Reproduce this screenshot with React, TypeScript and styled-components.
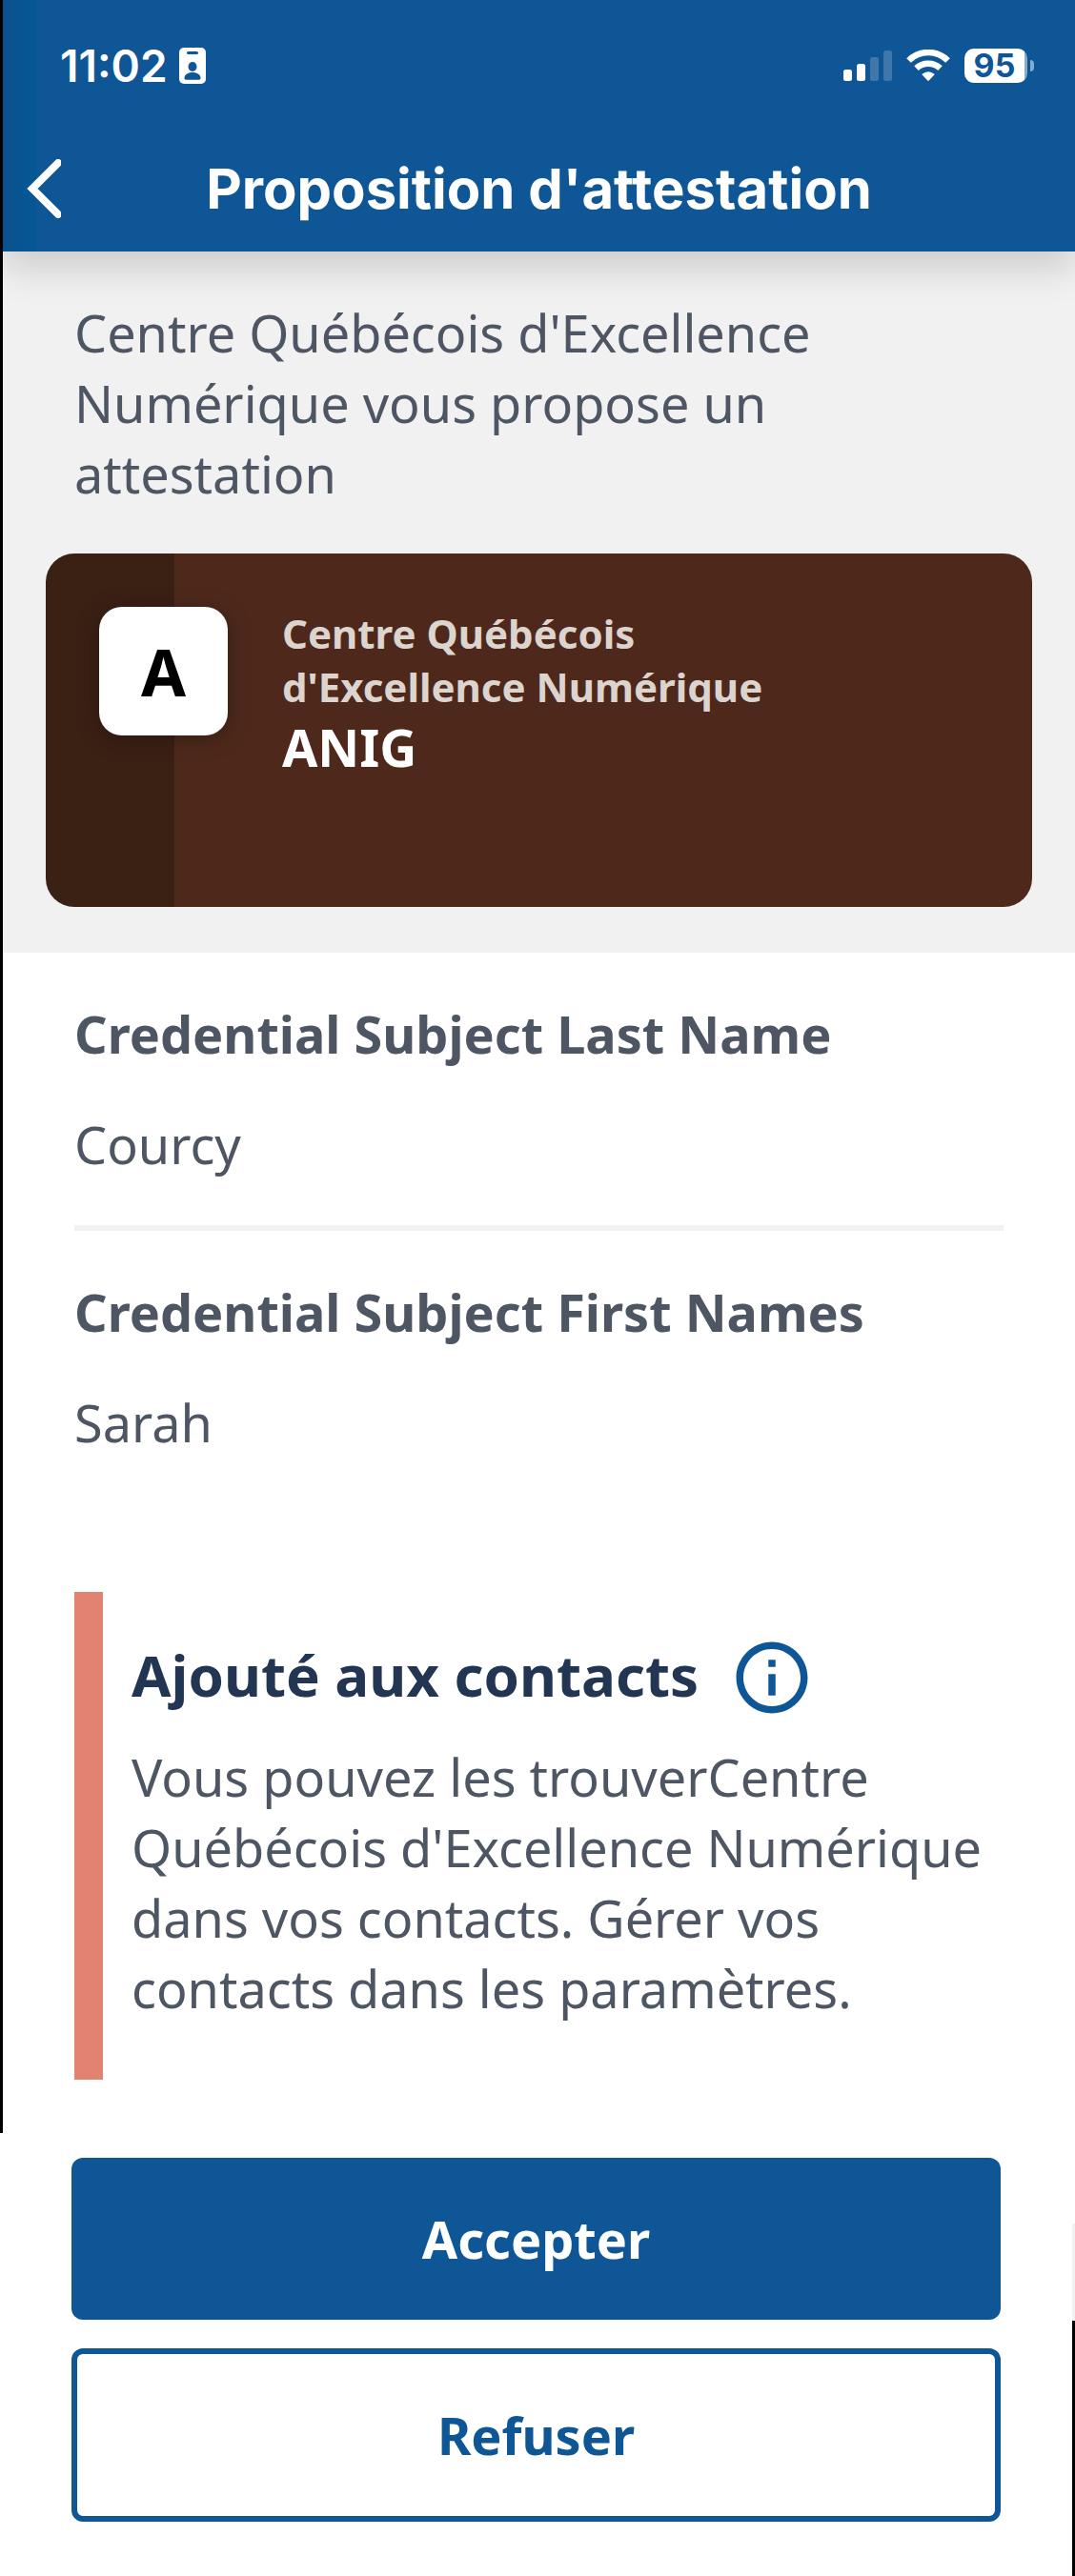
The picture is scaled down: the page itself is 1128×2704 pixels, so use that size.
import React from "react";
import styled, { createGlobalStyle } from "styled-components";
import { MdInfoOutline } from "react-icons/md";

const color = {
  blue: "#0f5696",
  ink: "#4e5664",
  navy: "#223654",
  grey: "#f1f1f1",
  salmon: "#e28271",
  brown: "#4e291b",
  brownDark: "#3b2014",
};

const GlobalStyle = createGlobalStyle`
  *, *::before, *::after { box-sizing: border-box; }
  body {
    margin: 0;
    background: #fff;
    color: ${color.ink};
    font-family: "Noto Sans", sans-serif;
    font-size: 54px;
    line-height: 74px;
  }
  h1, h2, p, dl, dd { margin: 0; }
  button { font: inherit; cursor: pointer; }
`;

const Screen = styled.div`
  display: flex;
  flex-direction: column;
  min-height: 100vh;
`;

const Scroll = styled.div`
  flex: 1;
  border-left: 3px solid #000;
`;

const Header = styled.header`
  position: relative;
  color: #fff;
  background: linear-gradient(to right, #0a528f, #055794 35px, transparent 35px) ${color.blue};
  box-shadow: 0 18px 36px rgba(0, 0, 0, 0.15);
  font-family: Inter, sans-serif;
`;

const StatusBar = styled.div`
  display: flex;
  align-items: center;
  justify-content: space-between;
  height: 132px;
  padding: 6px 43px 0 60px;
`;

const StatusGroup = styled.div<{ $gap: number }>`
  display: flex;
  align-items: center;
  gap: ${(p) => p.$gap}px;
`;

const Time = styled.time`
  font-size: 46px;
  font-weight: 600;
`;

const Battery = styled.div`
  display: flex;
  align-items: center;
  gap: 3px;
`;

const BatteryBody = styled.span`
  width: 66px;
  height: 36px;
  padding-right: 3px;
  border-radius: 10px;
  background: linear-gradient(to right, #fff 63px, #87abcb 63px);
  color: ${color.blue};
  font-size: 34px;
  font-weight: 700;
  line-height: 36px;
  text-align: center;
`;

const BatteryTip = styled.span`
  width: 4px;
  height: 12px;
  border-radius: 0 6px 6px 0;
  background: #87abcb;
`;

const NavBar = styled.div`
  display: grid;
  grid-template-columns: 90px 1fr 90px;
  align-items: center;
  height: 132px;
`;

const BackButton = styled.button`
  display: flex;
  padding: 0 0 0 24px;
  border: 0;
  background: none;
  color: inherit;
`;

const Title = styled.h1`
  font-size: 58px;
  font-weight: 700;
  text-align: center;
`;

const Offer = styled.section`
  padding: 48px 45px;
  background: ${color.grey};
`;

const Intro = styled.p`
  padding: 0 30px 47px;
`;

const Card = styled.article`
  display: grid;
  grid-template-columns: 135px 1fr 135px;
  min-height: 371px;
  border-radius: 30px;
  background: linear-gradient(to right, ${color.brownDark} 135px, ${color.brown} 135px);
  padding: 56px;
  column-gap: 57px;
`;

const CardLogo = styled.div`
  display: flex;
  align-items: center;
  justify-content: center;
  width: 135px;
  height: 135px;
  border-radius: 24px;
  background: #fff;
  box-shadow: 0 3px 24px rgba(0, 0, 0, 0.3);
  color: #000;
  font-size: 68px;
  font-weight: 700;
`;

const Issuer = styled.p`
  color: #dbd4cf;
  font-size: 42px;
  font-weight: 700;
  line-height: 56px;
`;

const CardName = styled.h2`
  color: #fff;
  font-size: 54px;
  line-height: 70px;
`;

const Fields = styled.dl`
  padding: 0 75px;
`;

const Field = styled.div`
  display: flex;
  flex-direction: column;
  gap: 42px;
  padding: 48px 0;

  & + & {
    border-top: 6px solid ${color.grey};
  }
`;

const FieldLabel = styled.dt`
  font-weight: 700;
`;

const Notice = styled.section`
  margin: 93px 75px 56px;
  padding: 45px 0 59px 30px;
  border-left: 30px solid ${color.salmon};
`;

const NoticeHead = styled.div`
  display: flex;
  align-items: flex-start;
  gap: 32px;
  padding-bottom: 22px;
`;

const NoticeTitle = styled.h2`
  color: ${color.navy};
  font-size: 60px;
  line-height: 84px;
`;

const InfoButton = styled.button`
  display: flex;
  padding: 0;
  border: 0;
  background: none;
  color: ${color.blue};
`;

const Footer = styled.footer`
  display: flex;
  flex-direction: column;
  gap: 30px;
  padding: 26px 78px 57px 75px;
  background:
    linear-gradient(#fff 95px, ${color.grey} 95px, ${color.grey} 197px, #000 197px)
    right / 3px 100% no-repeat #fff;
`;

const ActionButton = styled.button<{ $outlined?: boolean }>`
  padding: 48px;
  border: ${(p) => (p.$outlined ? `6px solid ${color.blue}` : "0")};
  border-radius: 12px;
  background: ${(p) => (p.$outlined ? "#fff" : color.blue)};
  color: ${(p) => (p.$outlined ? color.blue : "#fff")};
  font-weight: 700;
`;

const BadgeIcon = () => (
  <svg width="28" height="38" viewBox="0 0 28 38" aria-hidden="true">
    <rect width="28" height="38" rx="5" fill="#fff" />
    <rect x="8" y="4" width="12" height="3" rx="1.5" fill={color.blue} />
    <ellipse cx="14" cy="20" rx="4.5" ry="5" fill={color.blue} />
    <path d="M5.5 32c0-3.500 3.500-6 8.500-6s8.500 2.500 8.500 6c0 1.200-.5 1.700-1.500 1.700H7c-1 0-1.500-.5-1.500-1.700z" fill={color.blue} />
  </svg>
);

const SignalIcon = () => (
  <svg width="51" height="32" viewBox="0 0 51 32" fill="#fff" aria-hidden="true">
    <rect y="20" width="9" height="12" rx="2.5" />
    <rect x="14" y="14" width="9" height="18" rx="2.5" />
    <rect x="28" y="7" width="9" height="25" rx="2.5" opacity="0.2" />
    <rect x="42" width="9" height="32" rx="2.5" opacity="0.2" />
  </svg>
);

const WifiIcon = () => (
  <svg width="46" height="34" viewBox="0 0 46 34" fill="none" aria-hidden="true">
    <path d="M2.500 11.500a29 29 0 0 1 41 0" stroke="#fff" strokeWidth="6.500" />
    <path d="M10.500 19.700a18 18 0 0 1 25 0" stroke="#fff" strokeWidth="6.500" />
    <path d="M16.200 26q6.800-5.500 13.600 0L23 33.200z" fill="#fff" />
  </svg>
);

const BackIcon = () => (
  <svg width="37" height="62" viewBox="0 0 37 62" fill="none" aria-hidden="true">
    <path d="M34 4 7 31l27 27" stroke="#fff" strokeWidth="8" strokeLinecap="round" />
  </svg>
);

const fields = [
  { label: "Credential Subject Last Name", value: "Courcy" },
  { label: "Credential Subject First Names", value: "Sarah" },
];

export default function App() {
  return (
    <Screen>
      <GlobalStyle />
      <Scroll>
        <Header>
          <StatusBar>
            <StatusGroup $gap={12}>
              <Time>11:02</Time>
              <BadgeIcon />
            </StatusGroup>
            <StatusGroup $gap={15}>
              <SignalIcon />
              <WifiIcon />
              <Battery>
                <BatteryBody>95</BatteryBody>
                <BatteryTip />
              </Battery>
            </StatusGroup>
          </StatusBar>
          <NavBar>
            <BackButton type="button" aria-label="Retour">
              <BackIcon />
            </BackButton>
            <Title>Proposition d'attestation</Title>
          </NavBar>
        </Header>
        <main>
          <Offer>
            <Intro>Centre Québécois d'Excellence Numérique vous propose un attestation</Intro>
            <Card>
              <CardLogo>A</CardLogo>
              <div>
                <Issuer>Centre Québécois d'Excellence Numérique</Issuer>
                <CardName>ANIG</CardName>
              </div>
            </Card>
          </Offer>
          <Fields>
            {fields.map((f) => (
              <Field key={f.label}>
                <FieldLabel>{f.label}</FieldLabel>
                <dd>{f.value}</dd>
              </Field>
            ))}
          </Fields>
          <Notice>
            <NoticeHead>
              <NoticeTitle>Ajouté aux contacts</NoticeTitle>
              <InfoButton type="button" aria-label="Informations">
                <MdInfoOutline size={90} />
              </InfoButton>
            </NoticeHead>
            <p>
              Vous pouvez les trouverCentre Québécois d'Excellence Numérique dans vos contacts. Gérer
              vos contacts dans les paramètres.
            </p>
          </Notice>
        </main>
      </Scroll>
      <Footer>
        <ActionButton type="button">Accepter</ActionButton>
        <ActionButton type="button" $outlined>
          Refuser
        </ActionButton>
      </Footer>
    </Screen>
  );
}
